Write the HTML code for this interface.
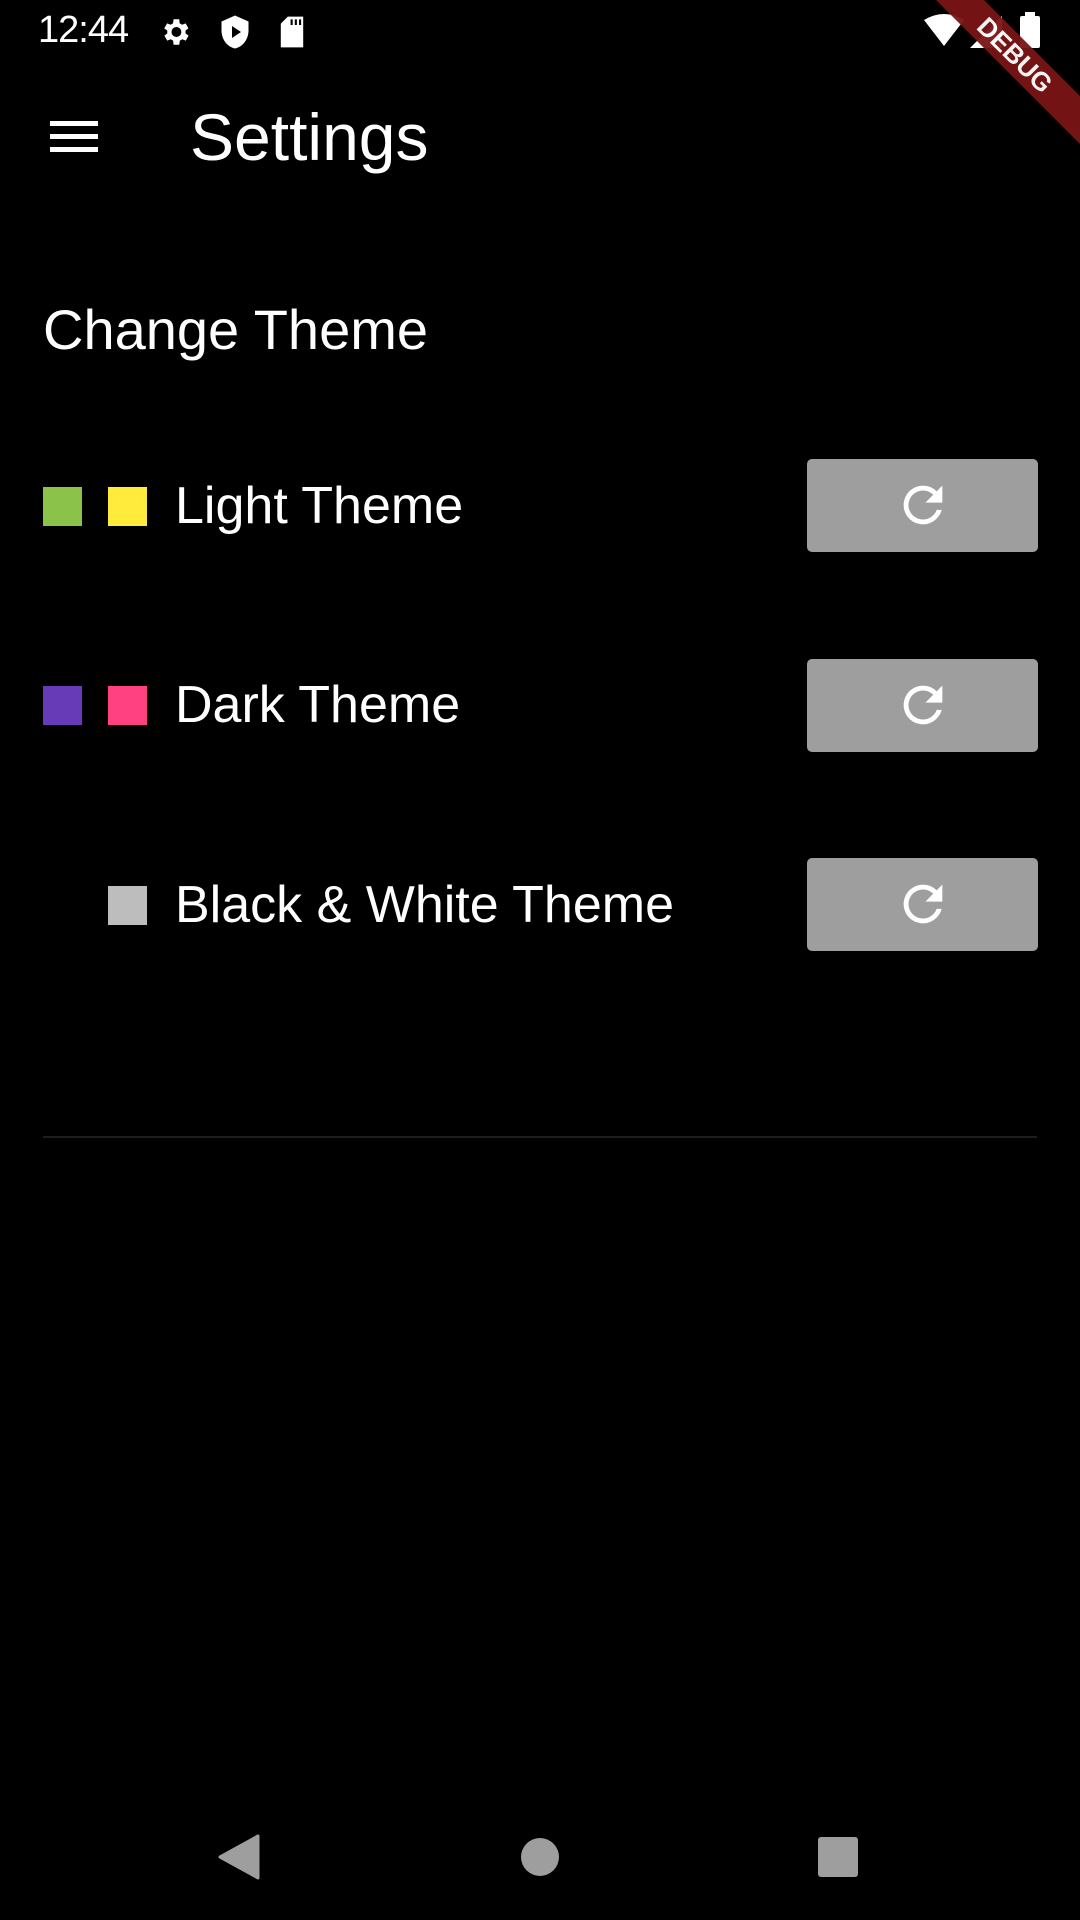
<!DOCTYPE html>
<html><head><meta charset="utf-8"><style>
*{margin:0;padding:0;box-sizing:border-box}
body{width:1080px;height:1920px;background:#000;position:relative;overflow:hidden;font-family:"Liberation Sans",sans-serif;color:#fff}
.a{position:absolute}
.sq{position:absolute;width:39px;height:39px}
.lbl{position:absolute;left:175px;font-size:52px;line-height:60px;white-space:nowrap}
.btn{position:absolute;left:807px;width:231px;height:93px;background:#9e9e9e;border-radius:5px}
.btn svg{position:absolute;left:87px;top:17px}
</style></head><body>
<div class="a" style="left:38px;top:10px;font-size:38px;line-height:40px;letter-spacing:-1px">12:44</div>
<svg class="a" style="left:158px;top:14px" width="34" height="36" viewBox="0 0 24 24"><path fill="#fff" d="M19.4 13a7.5 7.5 0 0 0 0-2l2.1-1.6-2-3.5-2.5 1a7 7 0 0 0-1.7-1L15 3h-4l-.4 2.9a7 7 0 0 0-1.7 1l-2.5-1-2 3.5L6.6 11a7.5 7.5 0 0 0 0 2l-2.1 1.6 2 3.5 2.5-1a7 7 0 0 0 1.7 1L11 21h4l.4-2.9a7 7 0 0 0 1.7-1l2.5 1 2-3.5zM13 15.5a3.5 3.5 0 1 1 0-7 3.5 3.5 0 0 1 0 7z"/></svg>
<svg class="a" style="left:220px;top:14px" width="30" height="36" viewBox="0 0 20 24"><path fill="#fff" d="M10 1 1 5v6c0 6 4 11 9 12 5-1 9-6 9-12V5zM8 8l6 4-6 4z"/></svg>
<svg class="a" style="left:278px;top:15px" width="28" height="34" viewBox="0 0 20 24"><path fill="#fff" d="M7 1h11v22H2V6zM9 3v4h1.5V3zm3 0v4h1.5V3zm3 0v4h1.5V3z"/></svg>
<svg class="a" style="left:924px;top:14px" width="40" height="32" viewBox="0 0 40 32"><path fill="#fff" d="M0 6Q20-6 40 6L20 32z"/></svg>
<svg class="a" style="left:970px;top:16px" width="32" height="32" viewBox="0 0 32 32"><path fill="#fff" d="M32 0V32H0z"/></svg>
<div class="a" style="left:1020px;top:16px;width:20px;height:32px;background:#fff;border-radius:2px"></div>
<div class="a" style="left:1025px;top:12px;width:10px;height:5px;background:#fff"></div>
<div class="a" style="left:845px;top:38px;width:340px;height:34px;background:#7a1515;transform:rotate(45deg);color:#fff;font-weight:bold;font-size:26px;line-height:34px;text-align:center;opacity:.95">DEBUG</div>
<div class="a" style="left:50px;top:121px;width:48px;height:5px;background:#fff"></div>
<div class="a" style="left:50px;top:134px;width:48px;height:5px;background:#fff"></div>
<div class="a" style="left:50px;top:147px;width:48px;height:5px;background:#fff"></div>
<div class="a" style="left:190px;top:99px;font-size:66px;line-height:76px">Settings</div>
<div class="a" style="left:43px;top:297px;font-size:56px;line-height:66px">Change Theme</div>

<div class="sq" style="left:43px;top:487px;background:#8bc34a"></div>
<div class="sq" style="left:108px;top:487px;background:#ffeb3b"></div>
<div class="lbl" style="top:476px">Light Theme</div>
<div class="btn" style="top:459px"><svg width="58" height="58" viewBox="0 0 24 24"><path fill="#fff" d="M17.65 6.35A7.96 7.96 0 0 0 12 4a8 8 0 1 0 7.73 10h-2.08A6 6 0 1 1 12 6c1.66 0 3.14.69 4.22 1.78L13 11h7V4z"/></svg></div>

<div class="sq" style="left:43px;top:686px;background:#673ab7"></div>
<div class="sq" style="left:108px;top:686px;background:#ff4081"></div>
<div class="lbl" style="top:675px">Dark Theme</div>
<div class="btn" style="top:659px"><svg width="58" height="58" viewBox="0 0 24 24"><path fill="#fff" d="M17.65 6.35A7.96 7.96 0 0 0 12 4a8 8 0 1 0 7.73 10h-2.08A6 6 0 1 1 12 6c1.66 0 3.14.69 4.22 1.78L13 11h7V4z"/></svg></div>

<div class="sq" style="left:108px;top:886px;background:#bdbdbd"></div>
<div class="lbl" style="top:875px">Black &amp; White Theme</div>
<div class="btn" style="top:858px"><svg width="58" height="58" viewBox="0 0 24 24"><path fill="#fff" d="M17.65 6.35A7.96 7.96 0 0 0 12 4a8 8 0 1 0 7.73 10h-2.08A6 6 0 1 1 12 6c1.66 0 3.14.69 4.22 1.78L13 11h7V4z"/></svg></div>

<div class="a" style="left:43px;top:1136px;width:994px;height:2px;background:#1e1e1e"></div>

<svg class="a" style="left:218px;top:1834px" width="42" height="46" viewBox="0 0 42 46"><path fill="#9e9e9e" d="M40 2V44L2 23z" stroke="#9e9e9e" stroke-width="3" stroke-linejoin="round"/></svg>
<div class="a" style="left:521px;top:1838px;width:38px;height:38px;border-radius:50%;background:#9e9e9e"></div>
<div class="a" style="left:818px;top:1837px;width:40px;height:40px;border-radius:3px;background:#9e9e9e"></div>
</body></html>
